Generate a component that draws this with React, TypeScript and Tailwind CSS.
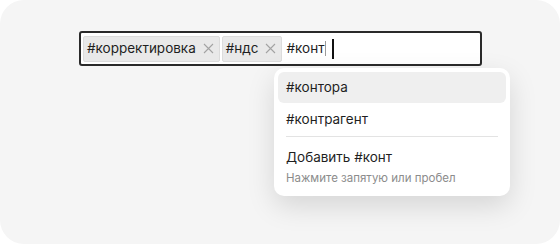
import React from "react";

function XIcon() {
  return (
    <svg width="11" height="11" viewBox="0 0 11 11" className="shrink-0">
      <path d="M1 1L10 10M10 1L1 10" stroke="#a3a3a3" strokeWidth="1.1" />
    </svg>
  );
}

function Tag({ label }: { label: string }) {
  return (
    <div className="flex h-[26px] items-center gap-[7px] rounded-[2px] border border-[#dcdcdc] bg-[#e9e9e9] pl-[3px] pr-[5px] text-[13.5px] text-[#1f1f1f]">
      <span>{label}</span>
      <XIcon />
    </div>
  );
}

export default function App() {
  return (
    <div className="h-[244px] w-[560px] bg-white" style={{ fontFamily: "Inter, 'Noto Sans', sans-serif" }}>
      <div className="relative h-[244px] w-[560px] rounded-[24px] bg-[#f5f5f5] pt-[31px]">
        <div className="ml-[79px] flex h-[35px] w-[403px] items-center gap-[2px] rounded-[3px] border-2 border-[#2a2a2a] bg-white p-[2px]">
          <Tag label="#корректировка" />
          <Tag label="#ндс" />
          <div className="ml-[2px] flex items-center text-[13.5px] text-[#1f1f1f]">
            <span>#конт</span>
            <span className="ml-[1px] h-[15px] w-px bg-[#9a9a9a]" />
            <span className="ml-[6px] h-[20px] w-[2px] bg-[#111]" />
          </div>
        </div>
        <div className="absolute left-[274px] top-[68px] w-[236px] rounded-[10px] bg-white p-[4px] shadow-[0_10px_28px_rgba(0,0,0,0.13)]">
          <div className="flex h-[31px] items-center rounded-[6px] bg-[#efefef] px-[8px] text-[13.5px] text-[#1f1f1f]">
            #контора
          </div>
          <div className="flex h-[32px] items-center px-[8px] text-[13.5px] text-[#1f1f1f]">
            #контрагент
          </div>
          <div className="mx-[8px] mt-[1px] h-px bg-[#e3e3e3]" />
          <div className="px-[8px] pb-[7px] pt-[11px]">
            <div className="text-[13.5px] leading-[18px] text-[#1f1f1f]">Добавить #конт</div>
            <div className="mt-[5px] text-[11.5px] leading-[14px] text-[#8c8c8c]">Нажмите запятую или пробел</div>
          </div>
        </div>
      </div>
    </div>
  );
}
